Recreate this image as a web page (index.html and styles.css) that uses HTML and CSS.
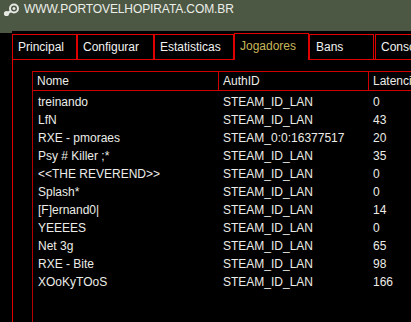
FILE: index.html
```html
<!DOCTYPE html>
<html lang="pt">
<head>
  <meta charset="UTF-8" />
  <title>Jogadores</title>
  <link rel="stylesheet" href="styles.css">
</head>
<body>

  <header class="topbar">
    <svg class="logo" width="17" height="14" viewBox="0 0 17 14">
      <circle cx="12" cy="5.5" r="4" fill="none" stroke="#e6e8e3" stroke-width="2"/>
      <circle cx="12" cy="5.5" r="1.5" fill="#e6e8e3"/>
      <line x1="9" y1="8" x2="5" y2="10.5" stroke="#e6e8e3" stroke-width="2.4"/>
      <circle cx="4.5" cy="10.5" r="2.6" fill="#e6e8e3"/>
    </svg>
    <span class="site">WWW.PORTOVELHOPIRATA.COM.BR</span>
  </header>

  <div class="window">
    <div class="tabs">
      <div class="tab t-principal">Principal</div>
      <div class="tab t-config">Configurar</div>
      <div class="tab t-stats">Estatisticas</div>
      <div class="tab t-players active">Jogadores</div>
      <div class="tab t-bans">Bans</div>
      <div class="tab t-console">Console</div>
    </div>

    <div class="panel">
      <div class="list">
        <div class="list-head">
          <div class="col c-name">Nome</div>
          <div class="col c-auth">AuthID</div>
          <div class="col c-lat">Latencia</div>
        </div>
        <div class="row"><div class="col c-name">treinando</div><div class="col c-auth">STEAM_ID_LAN</div><div class="col c-lat">0</div></div>
        <div class="row"><div class="col c-name">LfN</div><div class="col c-auth">STEAM_ID_LAN</div><div class="col c-lat">43</div></div>
        <div class="row"><div class="col c-name">RXE - pmoraes</div><div class="col c-auth">STEAM_0:0:16377517</div><div class="col c-lat">20</div></div>
        <div class="row"><div class="col c-name">Psy # Killer ;*</div><div class="col c-auth">STEAM_ID_LAN</div><div class="col c-lat">35</div></div>
        <div class="row"><div class="col c-name">&lt;&lt;THE REVEREND&gt;&gt;</div><div class="col c-auth">STEAM_ID_LAN</div><div class="col c-lat">0</div></div>
        <div class="row"><div class="col c-name">Splash*</div><div class="col c-auth">STEAM_ID_LAN</div><div class="col c-lat">0</div></div>
        <div class="row"><div class="col c-name">[F]ernand0|</div><div class="col c-auth">STEAM_ID_LAN</div><div class="col c-lat">14</div></div>
        <div class="row"><div class="col c-name">YEEEES</div><div class="col c-auth">STEAM_ID_LAN</div><div class="col c-lat">0</div></div>
        <div class="row"><div class="col c-name">Net 3g</div><div class="col c-auth">STEAM_ID_LAN</div><div class="col c-lat">65</div></div>
        <div class="row"><div class="col c-name">RXE - Bite</div><div class="col c-auth">STEAM_ID_LAN</div><div class="col c-lat">98</div></div>
        <div class="row"><div class="col c-name">XOoKyTOoS</div><div class="col c-auth">STEAM_ID_LAN</div><div class="col c-lat">166</div></div>
      </div>
    </div>
  </div>

</body>
</html>
```

FILE: styles.css
```css
* {
  box-sizing: border-box;
}

html, body {
  height: 100%;
}

body {
  margin: 0;
  background: #000;
  color: #ecece8;
  font-family: "Liberation Sans", Arial, sans-serif;
  font-size: 12px;
  overflow: hidden;
  display: flex;
  flex-direction: column;
}

.topbar {
  height: 31px;
  flex: none;
  background: #4c5844;
  display: flex;
  align-items: flex-start;
  padding: 2px 0 0 2px;
}

.logo {
  display: block;
  margin-top: 1px;
}

.site {
  margin-left: 5px;
  line-height: 14px;
  color: #ecefe9;
  letter-spacing: -0.1px;
}

.window {
  flex: 1;
  display: flex;
  flex-direction: column;
  background: linear-gradient(#4c5844, #4c5844) no-repeat 0 0 / 12px 2px;
}

/* abas */
.tabs {
  display: flex;
  align-items: flex-end;
  padding: 1px 0 0 12px;
  height: 28px;
  flex: none;
  white-space: nowrap;
  position: relative;
  z-index: 1;
}

.tab {
  flex: none;
  height: 25px;
  border: 1px solid #e00000;
  border-bottom: none;
  padding: 1px 0 0 5px;
  line-height: 23px;
  color: #f2f2f2;
  background: #000;
}

.tab.active {
  height: 27px;
  margin-bottom: -1px;
  padding-top: 1px;
  color: #c8b65a;
}

.t-principal { width: 65px; }
.t-config { width: 77px; }
.t-stats { width: 80px; }
.t-players { width: 75px; }
.t-bans { width: 65px; padding-left: 6px; }
.t-console { width: 80px; margin-left: 1px; }

/* painel */
.panel {
  flex: 1;
  margin-left: 12px;
  border-top: 1px solid #e00000;
  border-left: 1px solid #e00000;
  padding: 11px 0 0 19px;
}

.list {
  height: 100%;
  border-left: 1px solid #b40000;
}

.list-head {
  display: flex;
  height: 20px;
  border-top: 1px solid #d00000;
  border-bottom: 1px solid #d00000;
  line-height: 18px;
  margin-bottom: 2px;
}

.list-head .col {
  padding-left: 4px;
}

.list-head .c-auth,
.list-head .c-lat {
  border-left: 1px solid #d00000;
}

.row {
  display: flex;
  height: 18px;
  line-height: 18px;
}

.col {
  flex: none;
  white-space: nowrap;
}

.c-name { width: 185px; padding-left: 5px; }
.c-auth { width: 150px; padding-left: 5px; }
.c-lat { flex: 1; padding-left: 5px; }
```
